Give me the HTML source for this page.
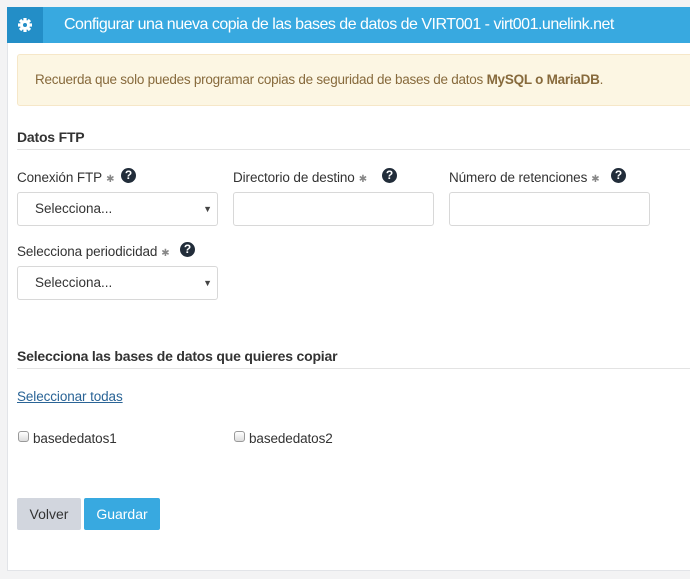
<!DOCTYPE html>
<html><head><meta charset="utf-8"><style>
*{box-sizing:border-box;margin:0;padding:0}
body{width:690px;height:579px;background:#f3f3f4;font-family:"Liberation Sans",sans-serif;position:relative;overflow:hidden;color:#333}
.panel{position:absolute;left:7px;top:7px;width:700px;height:564px;background:#fff;border:1px solid #e2e4e8}
.hdr{position:absolute;left:7px;top:7px;width:690px;height:36px;background:#38a9e0;color:#fff;font-size:16px;line-height:36px}
.hdr .ic{position:absolute;left:0;top:0;width:36px;height:36px;background:#238ec7}
.hdr .t{position:absolute;left:57px;top:0;letter-spacing:-0.5px}
.alert{position:absolute;left:17px;top:54px;width:690px;height:52px;background:#fcf6e3;border:1px solid #f6e7c8;border-radius:3px;color:#876a3c;font-size:13.5px;line-height:50px;padding-left:17px;letter-spacing:-0.25px}
.h{position:absolute;left:17px;font-size:14px;font-weight:bold;color:#333;width:690px;border-bottom:1px solid #e3e3e3;padding-bottom:4px;letter-spacing:-0.2px}
.lbl{position:absolute;font-size:13.5px;color:#333;letter-spacing:-0.1px}
.lbl .s{color:#888;font-size:10px;margin-left:4px}
.q{position:absolute;width:15px;height:15px;border-radius:50%;background:#222d3a;color:#fff;font-size:12px;font-weight:bold;text-align:center;line-height:15px}
.in{position:absolute;width:201px;height:34px;border:1px solid #d8d8d8;border-radius:3px;background:#fff;font-size:13.5px;line-height:32px;padding-left:17px;color:#333}
.in .ar{position:absolute;right:5px;top:0;font-size:9px;color:#444}
.cb{position:absolute;width:11px;height:11px;border:1px solid #999;border-radius:3px;background:linear-gradient(#fff,#ddd)}
.btn{position:absolute;top:498px;height:32px;border-radius:2px;font-size:14px;line-height:32px;text-align:center}
</style></head><body>
<div class="panel"></div>
<div class="hdr"><div class="ic"><svg width="36" height="36" viewBox="0 0 36 36"><g fill="#fff" transform="translate(18,18)"><circle r="5"/><rect x="-1.6" y="-7" width="3.2" height="14"/><rect x="-1.6" y="-7" width="3.2" height="14" transform="rotate(45)"/><rect x="-1.6" y="-7" width="3.2" height="14" transform="rotate(90)"/><rect x="-1.6" y="-7" width="3.2" height="14" transform="rotate(135)"/><circle r="2" fill="#238ec7"/></g></svg></div><div class="t">Configurar una nueva copia de las bases de datos de VIRT001 - virt001.unelink.net</div></div>
<div class="alert">Recuerda que solo puedes programar copias de seguridad de bases de datos <b>MySQL o MariaDB</b>.</div>
<div class="h" style="top:129px">Datos FTP</div>
<div class="lbl" style="left:17px;top:170px">Conexión FTP<span class="s">✱</span></div><div class="q" style="left:121px;top:168px">?</div>
<div class="lbl" style="left:233px;top:170px">Directorio de destino<span class="s">✱</span></div><div class="q" style="left:382px;top:168px">?</div>
<div class="lbl" style="left:449px;top:170px">Número de retenciones<span class="s">✱</span></div><div class="q" style="left:611px;top:168px">?</div>
<div class="in" style="left:17px;top:192px">Selecciona...<span class="ar">▼</span></div>
<div class="in" style="left:233px;top:192px"></div>
<div class="in" style="left:449px;top:192px"></div>
<div class="lbl" style="left:17px;top:244px">Selecciona periodicidad<span class="s">✱</span></div><div class="q" style="left:180px;top:242px">?</div>
<div class="in" style="left:17px;top:266px">Selecciona...<span class="ar">▼</span></div>
<div class="h" style="top:348px">Selecciona las bases de datos que quieres copiar</div>
<div class="lbl" style="left:17px;top:389px;color:#2a6496;text-decoration:underline">Seleccionar todas</div>
<div class="cb" style="left:18px;top:431px"></div><div class="lbl" style="left:33px;top:431px">basededatos1</div>
<div class="cb" style="left:234px;top:431px"></div><div class="lbl" style="left:249px;top:431px">basededatos2</div>
<div class="btn" style="left:17px;width:64px;background:#d2d6de;color:#333">Volver</div>
<div class="btn" style="left:84px;width:76px;background:#38a9e0;color:#fff">Guardar</div>
</body></html>
